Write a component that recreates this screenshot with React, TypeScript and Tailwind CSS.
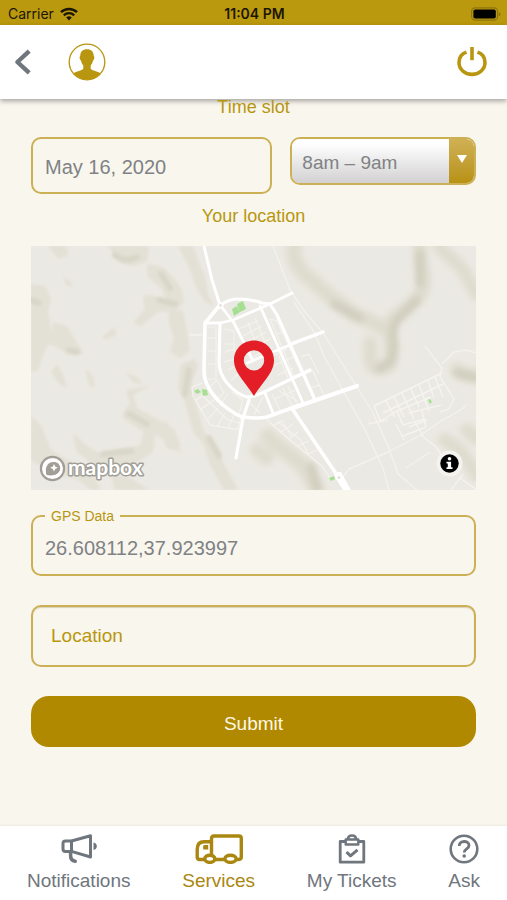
import type { ReactNode } from "react";

function WifiIcon() {
  return (
    <svg viewBox="0 0 18 14" className="h-3.5 w-[18px]" fill="none" stroke="#1a1603" aria-hidden="true">
      <path d="M1 5.2a11.6 11.6 0 0 1 16 0" strokeWidth="2.5" />
      <path d="M3.8 8.3a7.5 7.5 0 0 1 10.4 0" strokeWidth="2.3" />
      <path d="M9 13.4 6.2 10.6a4 4 0 0 1 5.6 0Z" fill="#1a1603" stroke="none" />
    </svg>
  );
}

function BatteryIcon() {
  return (
    <svg viewBox="0 0 30 14" className="h-3.5 w-[30px]" aria-hidden="true">
      <rect x="0.6" y="0.8" width="26" height="12.4" rx="3.6" fill="none" stroke="#8d7410" strokeWidth="1.2" />
      <rect x="2.4" y="2.5" width="22.4" height="9" rx="1.8" fill="#000" />
      <path d="M27.8 5v4.4q1.8-.8 1.8-2.2T27.8 5Z" fill="#8d7410" />
    </svg>
  );
}

function BackIcon() {
  return (
    <svg viewBox="0 0 18 26" className="h-[26px] w-[18px]" fill="none" stroke="#6f767d" strokeWidth="4.4" aria-hidden="true">
      <path d="M15.2 2.2 3.400 13l11.800 10.8" strokeLinejoin="round" />
    </svg>
  );
}

function ProfileIcon() {
  return (
    <svg viewBox="0 0 38 38" className="size-[38px]" aria-hidden="true">
      <circle cx="19" cy="19" r="17.8" fill="#fff" stroke="#b8960f" strokeWidth="1.3" />
      <path
        d="M19 6.200c4.200 0 6.900 2.500 6.700 6.800.8.300.9 1.500.4 2.900-.3.900-.6 1.500-1.100 1.700-.4 2.300-1.300 3.900-2.300 5v3.100c1.600 1.900 6.600 2.600 10.400 4.700A17.800 17.800 0 0 1 19 36.800 17.800 17.800 0 0 1 4.900 30.400c3.800-2.100 8.800-2.800 10.400-4.700v-3.100c-1-1.100-1.900-2.700-2.300-5-.5-.2-.8-.8-1.100-1.700-.5-1.400-.4-2.600.4-2.900-.2-4.300 2.500-6.800 6.700-6.800Z"
        fill="#b8960f"
      />
    </svg>
  );
}

function PowerIcon() {
  return (
    <svg viewBox="0 0 30 30" className="size-[30px]" fill="none" stroke="#b8960f" strokeWidth="3.6" aria-hidden="true">
      <path d="M9.500 5.100C5 6.600 2 10.500 2 15.500c0 6.700 5.700 11.900 13 11.900s13-5.200 13-11.900c0-5-3-8.900-7.500-10.400" />
      <path d="M15 0v13.200" />
    </svg>
  );
}

function MegaphoneIcon() {
  return (
    <svg viewBox="0 0 36 30" className="h-[30px] w-9" fill="none" stroke="currentColor" strokeWidth="3" strokeLinejoin="round" aria-hidden="true">
      <path d="M2 9.500q0-2.500 2.500-2.500h6v10.400h-6Q2 17.400 2 15Z" />
      <path d="M10.500 7 29.500 1.800v21.200L10.500 17.400" />
      <path d="M9.600 18v3.500q0 5.200 4.600 5.700" strokeLinecap="round" strokeWidth="3.500" />
      <path d="M32.500 8.500c4.400.6 4.400 7 0 7.600Z" fill="currentColor" stroke="none" />
    </svg>
  );
}

function TruckIcon() {
  return (
    <svg viewBox="0 0 48 30" className="h-[30px] w-12" fill="none" stroke="currentColor" strokeWidth="3.400" strokeLinejoin="round" aria-hidden="true">
      <path d="M9 25.500H4.500q-2.300 0-2.300-2.500v-7.500Q2.200 7.800 9 7.800h6.500" />
      <path d="M16.500 21.500V4.400q0-2.400 2.400-2.400h25q2.400 0 2.400 2.400v18.700q0 2.400-2.400 2.400h-2.400M20 25.500h9.500" />
      <ellipse cx="14.800" cy="24.800" rx="5" ry="3.600" />
      <ellipse cx="35.500" cy="24.800" rx="5.600" ry="3.600" />
      <path d="M8.200 15.600v-3.200q0-1.400 1.400-1.400h3.600v4.600Z" fill="currentColor" stroke="none" />
    </svg>
  );
}

function ClipboardIcon() {
  return (
    <svg viewBox="0 0 28 30" className="h-[30px] w-7" fill="none" stroke="currentColor" strokeWidth="2.800" strokeLinejoin="round" aria-hidden="true">
      <path d="M7.500 7.500H2.200v20.700h23.600V7.500h-5.300" />
      <path d="M7.700 5.500h12.600v5H7.700Z" strokeWidth="2.400" />
      <path d="M9.800 5.300c.4-5 8-5 8.400 0" strokeWidth="2.600" />
      <path d="m8.500 18 4 3.800 7-6" strokeWidth="3" />
    </svg>
  );
}

function QuestionIcon() {
  return (
    <svg viewBox="0 0 30 30" className="size-[30px]" fill="none" stroke="currentColor" strokeWidth="2.600" aria-hidden="true">
      <circle cx="15" cy="15" r="13.300" />
      <path d="M10.200 12c0-6 9.800-5.800 9.800-.6 0 3.400-4.800 3.400-4.800 7" strokeWidth="2.800" />
      <circle cx="15.200" cy="22" r="1.800" fill="currentColor" stroke="none" />
    </svg>
  );
}

function TerrainMap() {
  return (
    <svg viewBox="0 0 445 244" className="block w-full bg-[#ebe9e3]" role="img" aria-label="Map of your location">
      <defs>
        <filter id="haze" x="-20%" y="-20%" width="140%" height="140%">
          <feGaussianBlur stdDeviation="3" />
        </filter>
        <filter id="soft" x="-20%" y="-20%" width="140%" height="140%">
          <feGaussianBlur stdDeviation="1.600" />
        </filter>
      </defs>

      {/* western hillside shading */}
      <g filter="url(#soft)" fill="#e3e0d5">
        <path d="M17 0l18 0 2 9-9 4ZM76 0l7 8 7 9 13 3 13-5 2-15ZM147 0l15 0 5 14 7 16 3 18 6 12-10-5-8-14-7-20Z" />
        <path d="M116 18l16 3 12 12 7 12 2 12-9 8-17 1-17 14-8-3 12-14-2-13 8-1 15 5-4-11-14-12Z" />
        <path d="M138 64l14 0 5 28 2 12-10 8-10-6 4-14-5-14ZM0 38l14 2 6 12-3 14 4 24-9 19-5 15-7 2Z" />
        <path d="M22 76l14 4 12 20 5 8-15 1-12-8-13-5 8-10ZM33 30l7 6 2 6-8-4ZM72 90l12-9 1 8-8 4-6 0ZM20 126l6-8 6 10 4 14-8-4ZM54 122l8 8 2 12-6-3Z" />
        <path d="M91 168l8-10-4-14 24-4-17 9 4 13 18 10 19 11 7 17-13-3-13-9-2 18-15 10-20 10-22-5-20-16-3-18 14 13 16 9 15-6 22-3 4-14-20-13Z" />
        <path d="M0 170l10 9 10 25 20 12 20 10 10 18-10 0-14-11-22-5-24-14ZM94 126l10 4 8 8-9-1ZM135 174l10 18 5 14-14-4-6-14ZM80 228l20 4 18 12-34 0Z" />
        <path d="M150 118l14-5 3 8-6 15 3 20 9 30 12 14 8 18 14 26-14 0-14-25-6-20-11-13-8-30-7-14Z" />
      </g>
      <g filter="url(#soft)" fill="none" stroke="#d9d6c9" strokeLinecap="round">
        <path d="M84 9q10 8 22 2M130 28l9 14M128 54l16 4M0 54l8 3M98 168l18 10M72 208l28-3M38 104l8 2M158 124l-4 24M178 192l10 18" strokeWidth="6" />
      </g>

      {/* eastern ridges */}
      <g filter="url(#haze)" fill="none" stroke="#dfdccf" strokeLinecap="round" strokeLinejoin="round">
        <path d="M263 0c-2 14 4 24 20 36 12 12 24 20 34 28 12 9 24 10 33 17" strokeWidth="15" />
        <path d="M389 0c-2 17 9 32 1 47-7 11-18 17-28 26-6 7-3 20-2 30 1 12 0 18-9 19-6 0-9-1-11-5l-1-20" strokeWidth="14" />
        <path d="M408 0c10 13 23 18 29 33l8 15" strokeWidth="13" />
        <path d="M237 190c10 12 23 18 34 29 7 7 10 16 15 25" strokeWidth="16" />
        <path d="M426 124q10 8 24 5M414 194q18 10 31 35M226 204l10 8M436 184l9 8" strokeWidth="14" />
      </g>
      <g filter="url(#haze)" fill="none" stroke="#cfccbc" strokeWidth="7" strokeLinecap="round">
        <path d="M303 58l26 14M386 54l-20 20q-7 10-3 26l-3 15-12 8M389 8v30M280 220l6 22M426 127l20 5" />
      </g>

      {/* footpaths and outlying tracks */}
      <g fill="none" stroke="#f4f2ed" strokeWidth="1.400" strokeLinejoin="round">
        <path d="M242 0l17 44 15 22 18 21 34 54 15 24 16 35 10 28 19 16M263 56l20 30 11 26 20 36 20 36 18 38 6 22M337 178l20-4M309 235l9-12 37-16 35-18 20-14 18-10 8-6" />
        <path d="M394 100l17 22-2 9M411 118l12-12 12-2 10 3M409 131l14 22-5 10-9 3M390 189l15 12 15 22M375 222l24-16M420 244l12-16M446 244l-17-12" />
        <path d="M171 137l-10 4 1 9 17 29 30 5M158 89h14M236 174l23 20 33 27 8 13" />
      </g>

      {/* residential blocks */}
      <g fill="none" stroke="#f5f3ee" strokeWidth="1.100">
        <path d="M177 81h8v52h-8M177 92h8M177 105h8M177 118h8M193 83l10 2v18l-9 3M194 98h8M193 116l14-4M207 83l20-8M212 90l19-10M215 97l20-11M218 104l21-11M222 111l20-10M217 76l12 33M224 72l13 32M203 104l11 22M197 124l12-6M200 135l12-12" />
        <path d="M177 142l9-8 7 13-8 8M189 160l8-13M201 146l11 8-4 14M219 157l10 10M232 151l-9 18M241 148l8 16M248 145l19 10M243 153l25-10M252 142l9 18M257 140l9 18" />
        <path d="M239 73l7 2 24 52-7 3ZM246 88l8-3M252 102l8-3M240 111l16-8M242 120l20-9M247 129l15-7M248 110l9 22M274 128l8-3 12 27M280 142l8-3M270 111l8-3 10 20" />
        <path d="M165 154l12-8M170 163l13-9M177 173l10-11M186 181l8-14M197 182l6-13M207 183l3-12M172 150l25 24 12 3" />
        <path d="M241 180l10-5 10 16M250 186l12-8M258 193l9-7M247 176l22 17 8 14M266 200l12-5M276 208l10-4" />
      </g>
      <g fill="none" stroke="#f6f4ef" strokeWidth="1.400">
        <path d="M343 160l68-33M343 160l7 16M350 175l16-10 6 14 22-6M355 155l9 16M363 151l10 20M371 147l12 26M380 143l8 18M388 139l10 26M397 135l6 17M404 131l8 20M352 167l60-29M366 165l34-14M378 167l32-8M365 178l8 16M372 190l23-9-4-16M384 176l8 14M378 181l18-7" />
      </g>

      {/* main roads */}
      <g fill="none" stroke="#fff" strokeLinecap="round" strokeLinejoin="round">
        <path d="M173 0l8 34 8 25" strokeWidth="3" strokeLinecap="butt" />
        <path d="M189 59q10-6 17-6 14 0 25 4l8 1 7 11 38 85" strokeWidth="3.200" />
        <path d="M189 59l-15 18-1 47c0 8 2 14 6 20 5 8 10 13 17 18 6 4 10 8 16 9 9 1 16 2 24 0l33-12" strokeWidth="3.600" />
        <path d="M262 162l64-22" strokeWidth="4.200" />
        <path d="M174 77h15l-1 39c0 8 3 15 8 21 6 7 12 12 20 14 6 0 10-2 15-4l48-23" strokeWidth="3.200" />
        <path d="M189 77l13-3 37-16 22-11M189 59l14 18 19 38M229 60l43 97M216 117l43-18 10-4 23-9M234 147l8 20" strokeWidth="2.800" />
        <path d="M262 97l30-11M218 154l-6 18-7 40" strokeWidth="3.200" />
        <path d="M262 164l44 65" strokeWidth="3.600" />
      </g>
      <path d="M304 226h6l10 18h-8l-9-14Z" fill="#fff" />
      <circle cx="189.500" cy="59.500" r="3" fill="#fff" />
      <circle cx="189.500" cy="59.500" r="1.300" fill="#deddd8" />
      <circle cx="308" cy="231.500" r="1.300" fill="#deddd8" />

      {/* parks */}
      <path
        d="M201 63l5-3 3 6-6 4ZM206 58l6-3 3 8-6 3ZM163 145l4-2 3 3-4 2ZM171 143l5 1 1 5-5 1ZM298 232l5-2 1 3-4 2ZM397 154l2-1 2 3-2 2Z"
        fill="#a5df91"
      />

      {/* location pin */}
      <path
        d="M223 94.500c-11.500 0-20 8.800-20 19.800 0 12.200 10.600 20.700 20 35.700 9.400-15 20-23.500 20-35.700 0-11-8.500-19.800-20-19.800Zm0 9.700a10.200 10.200 0 1 1 0 20.400 10.200 10.200 0 0 1 0-20.400Z"
        fill="#e31e26"
        fillRule="evenodd"
      />

      {/* provider mark */}
      <circle cx="21.500" cy="222.500" r="11.600" fill="#fff" stroke="#a09e96" strokeWidth="2.200" />
      <path d="M15.500 229c-2-7 .6-13 7.200-13 4 0 6.500 2.600 6.500 6.200 0 5.800-6.600 8.300-13.700 6.800Z" fill="#a09e96" />
      <path d="m23 218 1.200 2.600 2.600 1.200-2.600 1.200-1.200 2.600-1.200-2.600-2.600-1.200 2.600-1.200Z" fill="#fff" />
      <text
        x="37"
        y="229"
        className="font-['Lato',sans-serif] text-[21px] font-bold"
        fill="#fff"
        stroke="#a09e96"
        strokeWidth="3"
        strokeLinejoin="round"
        paintOrder="stroke"
      >
        mapbox
      </text>

      {/* attribution */}
      <circle cx="418.500" cy="217.500" r="13" fill="#f4f3ef" />
      <circle cx="418.500" cy="217.500" r="9.200" fill="#000" />
      <circle cx="418.500" cy="212.700" r="1.800" fill="#fff" />
      <path d="M415.500 215.700h4.600v5.600h1.400v1.800h-6v-1.800h1.300v-3.800h-1.300Z" fill="#fff" />
    </svg>
  );
}

function SectionTitle({ children }: { children: ReactNode }) {
  return <h2 className="text-center text-lg leading-4 text-[#b8960f]">{children}</h2>;
}

const tabs = [
  { label: "Notifications", icon: <MegaphoneIcon />, active: false },
  { label: "Services", icon: <TruckIcon />, active: true },
  { label: "My Tickets", icon: <ClipboardIcon />, active: false },
  { label: "Ask", icon: <QuestionIcon />, active: false },
];

export default function App() {
  return (
    <div className="flex min-h-screen flex-col bg-[#f9f6ee] font-['Liberation_Sans',Arial,sans-serif]">
      <div className="grid h-[25px] grid-cols-3 items-center bg-[#bb990e] pt-0.5 pr-1.5 pl-2 font-['Inter',sans-serif] text-sm leading-5 text-[#1a1603]">
        <div className="flex items-center gap-1.5">
          <span>Carrier</span>
          <WifiIcon />
        </div>
        <span className="text-center font-semibold">11:04 PM</span>
        <div className="flex justify-end">
          <BatteryIcon />
        </div>
      </div>

      <header className="flex h-[74px] items-center bg-white px-3.5 shadow-[0_2px_5px_rgba(0,0,0,0.35)]">
        <button type="button" aria-label="Back">
          <BackIcon />
        </button>
        <button type="button" aria-label="Profile" className="ml-9">
          <ProfileIcon />
        </button>
        <button type="button" aria-label="Log out" className="mr-1.5 ml-auto">
          <PowerIcon />
        </button>
      </header>

      <main className="flex flex-1 flex-col px-[31px] pb-8">
        <SectionTitle>Time slot</SectionTitle>
        <div className="mt-[22px] grid grid-cols-[13fr_10fr] items-start gap-[18px]">
          <input
            type="text"
            aria-label="Date"
            defaultValue="May 16, 2020"
            className="h-[57px] w-full min-w-0 rounded-[10px] border-2 border-[#ccb055] bg-transparent px-3 pt-1 text-xl text-[#808285] outline-none"
          />
          <div className="relative h-12 overflow-hidden rounded-[10px] border-2 border-[#ccb055]">
            <select
              aria-label="Time slot"
              className="h-full w-full appearance-none bg-linear-to-b from-white from-10% to-[#d3d1d1] pt-1 pr-7 pl-2.5 text-[19px] text-[#808285] outline-none"
            >
              <option>8am – 9am</option>
              <option>9am – 10am</option>
            </select>
            <span className="pointer-events-none absolute inset-y-0 right-0 flex w-[25px] justify-center bg-linear-to-b from-[#d0b053] to-[#b8920f] pt-4">
              <svg viewBox="0 0 10 8" className="h-2 w-2.5" aria-hidden="true">
                <path d="M0 0h10L5 8Z" fill="#fff" />
              </svg>
            </span>
          </div>
        </div>

        <div className="mt-3.5 mb-[22px]">
          <SectionTitle>Your location</SectionTitle>
        </div>
        <TerrainMap />

        <fieldset className="mt-[18px] h-[68px] min-w-0 rounded-[10px] border-2 border-[#ccb055]">
          <legend className="ml-3 px-1.5 text-sm leading-4 text-[#b8960f]">
            <label htmlFor="gps">GPS Data</label>
          </legend>
          <input
            id="gps"
            type="text"
            defaultValue="26.608112,37.923997"
            className="h-12 w-full bg-transparent px-3 text-xl text-[#808285] outline-none"
          />
        </fieldset>

        <input
          type="text"
          aria-label="Location"
          placeholder="Location"
          className="mt-[29px] h-[62px] w-full rounded-[10px] border-2 border-[#ccb055] bg-transparent px-[18px] text-[19px] text-[#808285] shadow-[inset_0_1px_1px_rgba(120,100,20,0.25)] outline-none placeholder:text-[#b8960f] placeholder:opacity-100"
        />

        <button type="button" className="mt-[29px] h-[51px] w-full rounded-[18px] bg-[#b18900] pt-1.5 text-[19px] text-[#fdf8e4]">
          Submit
        </button>
      </main>

      <nav className="flex h-[74px] items-start justify-between bg-white px-[27px] pt-2 shadow-[0_-1px_2px_rgba(0,0,0,0.06)]">
        {tabs.map((tab) => (
          <a
            key={tab.label}
            href="#"
            aria-current={tab.active ? "page" : undefined}
            className={
              tab.active
                ? "flex flex-col items-center gap-[7px] text-[#a98710]"
                : "flex flex-col items-center gap-[7px] text-[#6f767d]"
            }
          >
            {tab.icon}
            <span className="text-[19px] leading-5">{tab.label}</span>
          </a>
        ))}
      </nav>
    </div>
  );
}
